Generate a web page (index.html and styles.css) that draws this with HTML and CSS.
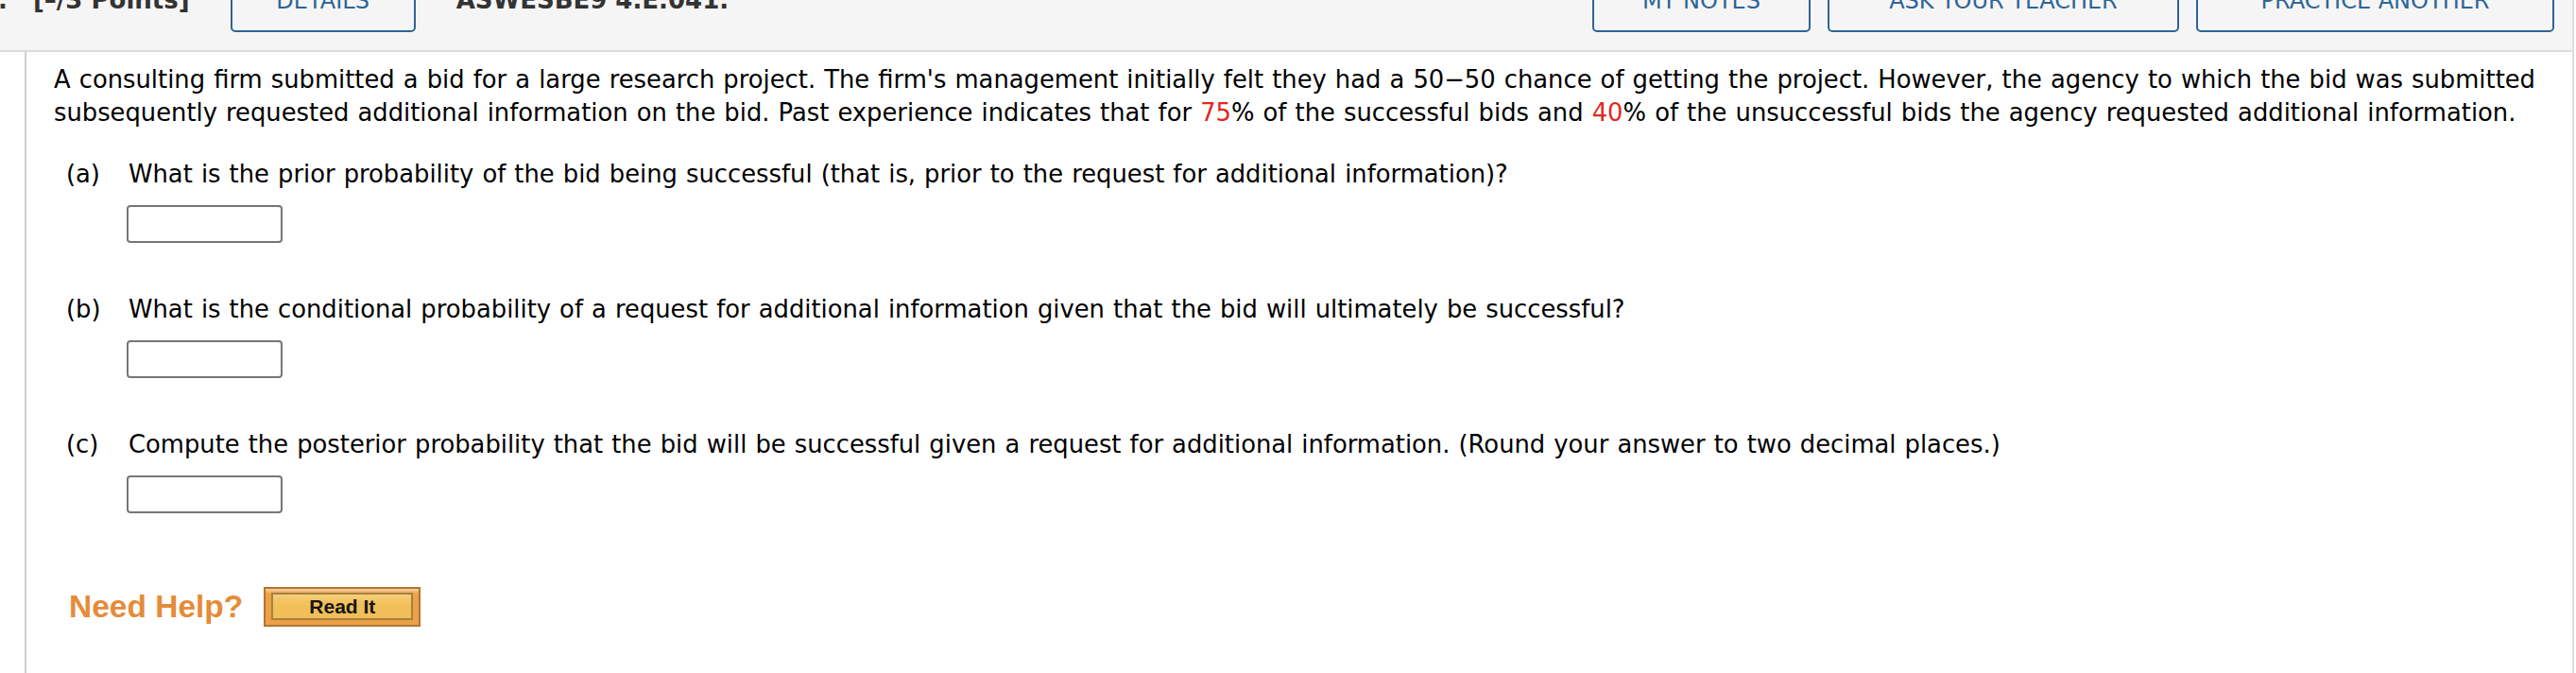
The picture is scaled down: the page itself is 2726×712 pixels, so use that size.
FILE: index.html
```html
<!DOCTYPE html>
<html lang="en">
<head>
<meta charset="utf-8">
<title>Question</title>
<link rel="stylesheet" href="styles.css">
</head>
<body>
<div class="page">
  <header class="qhead">
    <div class="qhead-left">
      <span class="qno">7.</span>
      <span class="qpts">[–/3 Points]</span>
      <button class="hbtn hbtn-details">DETAILS</button>
      <span class="qcode">ASWESBE9 4.E.041.</span>
    </div>
    <div class="qhead-right">
      <button class="hbtn hbtn-notes">MY NOTES</button>
      <button class="hbtn hbtn-ask">ASK YOUR TEACHER</button>
      <button class="hbtn hbtn-practice">PRACTICE ANOTHER</button>
    </div>
  </header>
  <main class="qbody">
    <p class="intro">A consulting firm submitted a bid for a large research project. The firm's management initially felt they had a 50−50 chance of getting the project. However, the agency to which the bid was submitted subsequently requested additional information on the bid. Past experience indicates that for <span class="num">75</span>% of the successful bids and <span class="num">40</span>% of the unsuccessful bids the agency requested additional information.</p>
    <div class="questions">
      <div class="q">
        <span class="q-label">(a)</span>
        <span class="q-text">What is the prior probability of the bid being successful (that is, prior to the request for additional information)?</span>
        <input class="answer" type="text">
      </div>
      <div class="q">
        <span class="q-label">(b)</span>
        <span class="q-text">What is the conditional probability of a request for additional information given that the bid will ultimately be successful?</span>
        <input class="answer" type="text">
      </div>
      <div class="q">
        <span class="q-label">(c)</span>
        <span class="q-text">Compute the posterior probability that the bid will be successful given a request for additional information. (Round your answer to two decimal places.)</span>
        <input class="answer" type="text">
      </div>
    </div>
    <div class="help">
      <span class="help-label">Need Help?</span>
      <button class="readit"><span class="readit-inner">Read It</span></button>
    </div>
  </main>
</div>
</body>
</html>
```
FILE: styles.css
```css
html, body {
  margin: 0;
  padding: 0;
  background: #ffffff;
  overflow: hidden;
}

body {
  font-family: "DejaVu Sans", Verdana, sans-serif;
  color: #000;
}

.page {
  width: 2724px;
}

/* ---------- header bar ---------- */
.qhead {
  display: flex;
  justify-content: space-between;
  align-items: flex-end;
  height: 55px;
  box-sizing: border-box;
  padding: 0 19px 19px 0;
  background: #f5f5f5;
  border-bottom: 2px solid #dcdcdc;
  border-right: 2px solid #dcdcdc;
}

.qhead-left,
.qhead-right {
  display: flex;
  align-items: flex-end;
}

.qhead-right {
  gap: 18px;
}

.qno,
.qpts,
.qcode {
  font-weight: bold;
  font-size: 26px;
  line-height: 30px;
  color: #333;
  margin-bottom: 19px;
  white-space: nowrap;
}

.qno {
  margin-left: -20px;
}

.qpts {
  margin-left: 27px;
}

.qcode {
  margin-left: 43px;
}

.hbtn {
  box-sizing: border-box;
  height: 66px;
  border: 2px solid #2d6597;
  border-radius: 5px;
  background: transparent;
  color: #2d6597;
  font-family: "DejaVu Sans", Verdana, sans-serif;
  font-size: 24px;
  line-height: 62px;
  padding: 0;
  text-align: center;
  white-space: nowrap;
}

.hbtn-details { width: 196px; margin-left: 43px; }
.hbtn-notes { width: 231px; }
.hbtn-ask { width: 372px; }
.hbtn-practice { width: 379px; }

/* ---------- question body ---------- */
.qbody {
  margin-left: 26px;
  min-height: 657px;
  box-sizing: border-box;
  padding: 12px 16px 0 29px;
  border-left: 2px solid #cfcfcf;
  border-right: 2px solid #dcdcdc;
}

.intro,
.q {
  font-size: 25.8px;
  line-height: 35px;
  word-spacing: 0.9px;
}

.intro {
  margin: 0;
}

.num {
  color: #e2281e;
}

.questions {
  margin: 30px 0 0 13px;
}

.q {
  display: grid;
  grid-template-columns: 66px 1fr;
}

.q + .q {
  margin-top: 53.5px;
}

.q-label {
  grid-column: 1;
  word-spacing: 0;
}

.q-text {
  grid-column: 2;
}

.answer {
  grid-column: 2;
  box-sizing: border-box;
  width: 165px;
  height: 40px;
  margin: 14.5px 0 0 -2px;
  border: 2px solid #767676;
  border-radius: 4px;
  background: #fff;
}

/* ---------- help row ---------- */
.help {
  display: flex;
  align-items: center;
  gap: 22px;
  margin: 78px 0 0 16px;
}

.help-label {
  font-family: "Liberation Sans", Arial, sans-serif;
  font-weight: bold;
  font-size: 33.5px;
  color: #e68b3a;
}

.readit {
  box-sizing: border-box;
  width: 166px;
  height: 42px;
  padding: 4px 6px 5px;
  border: 2px solid #b07630;
  background: linear-gradient(#f7d2a2 0, #eda248 5px, #eca047 100%);
  display: flex;
}

.readit-inner {
  flex: 1;
  display: flex;
  align-items: center;
  justify-content: center;
  border: 2px solid #a58142;
  background: linear-gradient(#f6cf7a, #f2c05b 40%, #f1be58);
  font-family: "Liberation Sans", Arial, sans-serif;
  font-weight: bold;
  font-size: 21px;
  color: #151515;
  line-height: 1;
}
```
